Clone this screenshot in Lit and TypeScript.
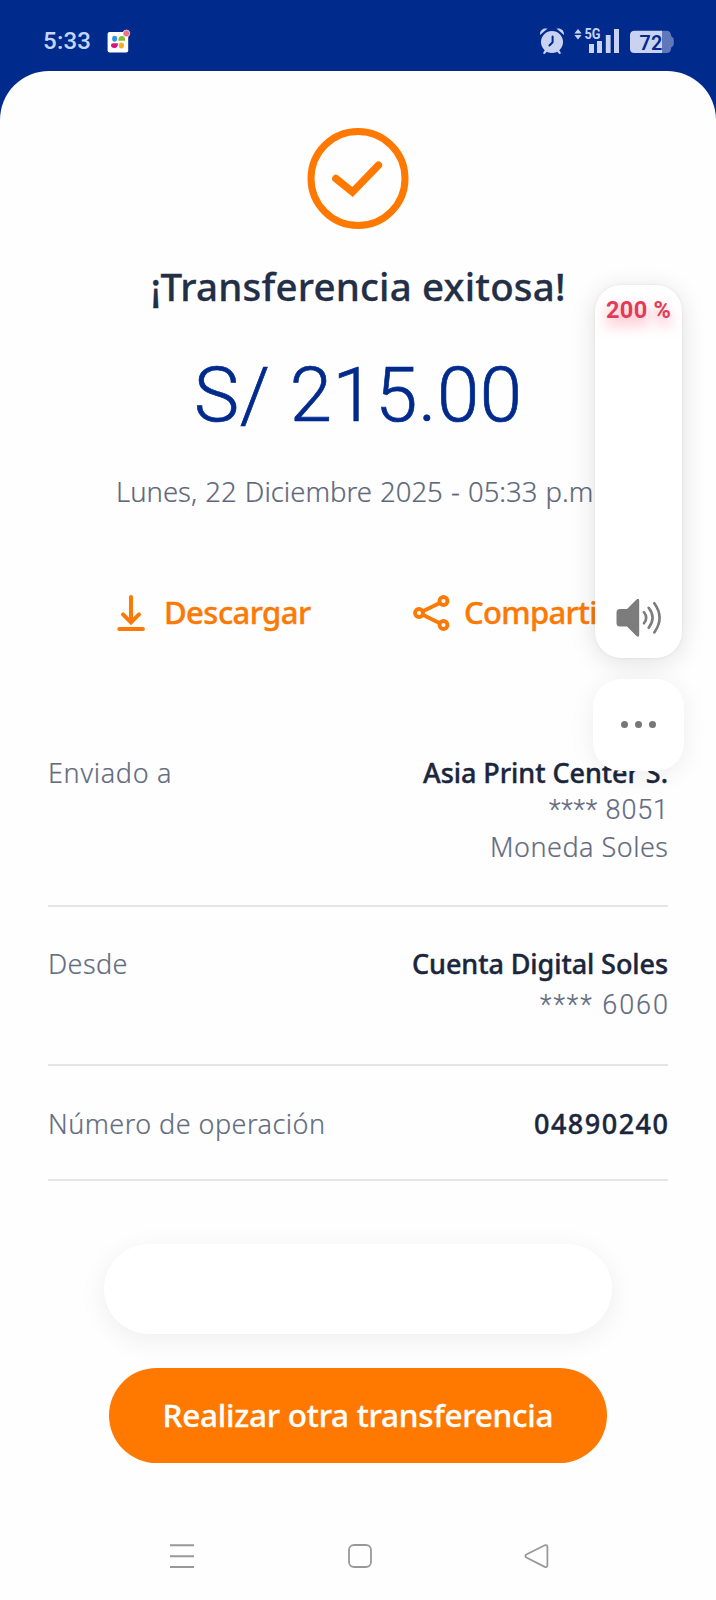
import { LitElement, html, css, svg } from "lit";
import { customElement, property } from "lit/decorators.js";

/** One line of text whose tracking is spread so that it fills `width` pixels. */
@customElement("tracked-text")
class TrackedText extends LitElement {
  static styles = css`
    :host { display: block; white-space: nowrap; flex: none; }
    .line { display: inline-block; white-space: pre; }
  `;
  @property() text = "";
  @property({ type: Number }) width = 0;

  updated() {
    const line = this.renderRoot.querySelector(".line") as HTMLElement;
    line.style.letterSpacing = "0px";
    const natural = line.getBoundingClientRect().width;
    const gap = (this.width - natural) / (this.text.length - 1);
    line.style.letterSpacing = `${gap}px`;
    line.style.marginRight = `${-gap}px`;
  }
  render() {
    return html`<span class="line">${this.text}</span>`;
  }
}

interface Line { text: string; width: number; kind: string }
interface Row { label: string; labelWidth: number; cls: string; lines: Line[] }

const rows: Row[] = [
  { label: "Enviado a", labelWidth: 123.5, cls: "r1", lines: [
    { text: "Asia Print Center S.", width: 245, kind: "strong" },
    { text: "**** 8051", width: 119, kind: "mask l36" },
    { text: "Moneda Soles", width: 178, kind: "l39" },
  ] },
  { label: "Desde", labelWidth: 79.5, cls: "r2", lines: [
    { text: "Cuenta Digital Soles", width: 256, kind: "strong" },
    { text: "**** 6060", width: 128, kind: "mask l40" },
  ] },
  { label: "Número de operación", labelWidth: 277, cls: "r3", lines: [
    { text: "04890240", width: 134, kind: "strong" },
  ] },
];

@customElement("app-root")
class AppRoot extends LitElement {
  static styles = css`
    :host { display: block; font-family: "Noto Sans", Roboto, sans-serif; }
    * { box-sizing: border-box; }
    svg { display: block; flex: none; }
    .screen { position: relative; width: 716px; height: 1600px; background: #002b8d; overflow: hidden; display: flex; flex-direction: column; }
    .status { height: 71px; flex: none; display: flex; align-items: flex-start; padding: 0 42px 0 43px; }
    .clock { font-family: Roboto, sans-serif; font-size: 24px; line-height: 28px; font-weight: 500; color: #c6d4ff; margin-top: 27px; }
    .app { margin: 29px 0 0 16px; }
    .signals { margin: 26px 0 0 auto; }
    .sheet { flex: 1; background: #fefefe; border-radius: 49px 49px 0 0; display: flex; flex-direction: column; align-items: center; }
    .check { margin-top: 56px; }
    .title { margin-top: 32px; font-size: 38.5px; line-height: 50px; font-weight: 500; color: #232f46; -webkit-text-stroke: .3px; }
    .amount { margin-top: 39px; font-family: Roboto, sans-serif; font-size: 76px; line-height: 90px; font-weight: 300; color: #002a8c; -webkit-text-stroke: .7px; }
    .date { margin-top: 34.5px; font-size: 27.5px; line-height: 34px; font-weight: 300; color: #5f687b; word-spacing: 1px; -webkit-text-stroke: .2px; }
    .actions { width: 100%; margin-top: 85px; height: 38px; padding-left: 116px; display: flex; align-items: center; color: #fb7905; font-size: 31px; line-height: 35px; font-weight: 500; -webkit-text-stroke: .4px; }
    .actions tracked-text { margin-bottom: 1px; }
    .download { margin-right: 18px; }
    .share { margin: 0 14px 0 102px; }
    .rows { width: 620px; margin-top: 123.5px; }
    .row { display: flex; justify-content: space-between; border-bottom: 2px solid #e4e5e7; font-size: 27px; line-height: 36px; font-weight: 300; color: #646c7e; -webkit-text-stroke: .2px; }
    .r1 { height: 151.5px; }
    .r2 { height: 159px; padding-top: 39.5px; }
    .r3 { height: 115px; padding-top: 40px; }
    .values { display: flex; flex-direction: column; align-items: flex-end; }
    .strong { font-weight: 500; color: #1b263d; -webkit-text-stroke: .4px; }
    .mask { font-family: Roboto, sans-serif; }
    .l36 { line-height: 38px; margin-bottom: -2px; }
    .l39 { line-height: 39px; }
    .l40 { line-height: 46px; }
    .ghost { width: 508px; height: 90px; flex: none; margin-top: 63.5px; border-radius: 45px; background: #fff; box-shadow: 0 6px 28px rgba(0,0,0,.065); }
    .cta { width: 498px; height: 95px; flex: none; margin-top: 33.5px; padding-bottom: 1px; border-radius: 47.5px; background: #ff7900; display: flex; align-items: center; justify-content: center; color: #fff; font-size: 31.5px; line-height: 38px; font-weight: 500; -webkit-text-stroke: .3px; }
    .nav { width: 100%; margin-top: 80px; padding-left: 169px; display: flex; }
    .home { margin-left: 152px; }
    .back { margin-left: 151px; }
    .volume { position: absolute; left: 595px; top: 285px; width: 87px; height: 373px; border-radius: 26px; background: #fff; box-shadow: 0 4px 26px rgba(0,0,0,.12), 0 0 3px rgba(0,0,0,.07); display: flex; flex-direction: column; align-items: center; justify-content: space-between; padding: 11px 0 20px; }
    .percent { font-family: Roboto, sans-serif; font-size: 23.5px; line-height: 28px; font-weight: 700; color: #e23b56; text-shadow: 0 7px 14px rgba(255,60,95,.55); }
    .more { position: absolute; left: 593px; top: 679px; width: 91px; height: 92px; border-radius: 28px; background: #fff; box-shadow: 0 4px 26px rgba(0,0,0,.07); display: flex; align-items: center; justify-content: center; gap: 7px; padding-bottom: 1px; }
    .dot { width: 7px; height: 7px; border-radius: 50%; background: #777; }
  `;

  private statusIcons() {
    return svg`<svg width="134" height="30" viewBox="540 26 134 30">
      <g fill="#c9d3f1">
        <circle cx="552" cy="42" r="11"/>
        <path d="M540 35C539.600 30.400 543 27.600 547.600 28.600Z M564 35C564.400 30.400 561 27.600 556.400 28.600Z"/>
        <path d="M545.500 49l-2.200 3.400a1 1 0 0 0 1.800 1l2.900-3Z M558.500 49l2.200 3.400a1 1 0 0 1-1.800 1l-2.900-3Z"/>
        <path d="M574.400 33.400L578 29l3.600 4.400Z M574.400 35L578 39.400l3.600-4.400Z"/>
        <rect x="589" y="44" width="5" height="9"/><rect x="597" y="41" width="5" height="12"/>
        <rect x="605.800" y="35" width="4.800" height="18"/><rect x="614" y="29" width="5" height="24"/>
        <text x="584.400" y="39.200" font-size="13.800" font-weight="700" font-family="Roboto" textLength="16" lengthAdjust="spacingAndGlyphs">5G</text>
      </g>
      <path d="M552.600 36.500v5.800l-3.200 3.200" fill="none" stroke="#002b8d" stroke-width="2" stroke-linecap="round"/>
      <path d="M662 30.700h4.500q4 0 4.500 4.400 0 1.600 1.400 2.200 1.400.6 1.400 2.400v4.400q0 1.800-1.400 2.400-1.400.6-1.400 2.200-.5 4.400-4.500 4.400H662Z" fill="#6078ba"/>
      <path d="M634.500 30.700H662V53.100h-27.500q-4.500 0-4.500-4.500V35.200q0-4.500 4.500-4.500Z" fill="#c9d3f1"/>
      <text x="639.600" y="50.200" font-size="20.500" font-weight="600" font-family="Roboto" fill="#002b8d" textLength="22.600" lengthAdjust="spacingAndGlyphs">72</text>
    </svg>`;
  }

  render() {
    return html`<div class="screen">
      <div class="status">
        <tracked-text class="clock" text="5:33" width="48"></tracked-text>
        <svg class="app" width="24" height="24" viewBox="107 29 24 24">
          <rect x="107.600" y="32" width="20.600" height="20.600" rx="2" fill="#fff"/>
          <ellipse cx="114.600" cy="38.800" rx="2.500" ry="3" fill="#2a9bdc"/>
          <path d="M118.400 40.800q-.2-4.800 3.600-4.800 3.200 0 3.200 4.800Z" fill="#7fbf2c"/>
          <path d="M111 45q0-1.800 2.200-1.800h4.800q0 4.600-3.400 4.800-3.600.2-3.600-3Z" fill="#d9147d"/>
          <ellipse cx="121.400" cy="45.400" rx="2.600" ry="3" fill="#f6ab2a"/>
          <circle cx="126.400" cy="33.400" r="3.400" fill="#f0707f" stroke="#fff" stroke-width=".6"/>
        </svg>
        <div class="signals">${this.statusIcons()}</div>
      </div>
      <div class="sheet">
        <svg class="check" width="102" height="102" viewBox="0 0 102 102" fill="none" stroke="#ff7900">
          <circle cx="51" cy="51.500" r="47" stroke-width="7"/>
          <path d="M28.800 51.500L45.500 65L71.500 38.200" stroke-width="7.400" stroke-linecap="round"/>
        </svg>
        <tracked-text class="title" text="¡Transferencia exitosa!" width="415"></tracked-text>
        <tracked-text class="amount" text="S/ 215.00" width="328"></tracked-text>
        <tracked-text class="date" text="Lunes, 22 Diciembre 2025 - 05:33 p.m." width="484"></tracked-text>
        <div class="actions">
          <svg class="download" width="30" height="38" viewBox="0 0 30 38" fill="none" stroke="#fb7905" stroke-width="4" stroke-linecap="round">
            <path d="M15 3v25M7 20.300l8 8 8-8M3.300 35h23.600"/>
          </svg>
          <tracked-text text="Descargar" width="147"></tracked-text>
          <svg class="share" width="37" height="38" viewBox="0 0 37 38" fill="none" stroke="#fb7905" stroke-width="3.800">
            <circle cx="6" cy="19" r="4"/><circle cx="30.500" cy="7" r="4"/><circle cx="30.500" cy="31" r="4"/>
            <path d="M9.800 17.200L26.800 9M9.800 20.800L26.800 29.200"/>
          </svg>
          <tracked-text text="Compartir" width="146"></tracked-text>
        </div>
        <div class="rows">
          ${rows.map(r => html`<div class="row ${r.cls}">
            <tracked-text .text=${r.label} .width=${r.labelWidth}></tracked-text>
            <div class="values">${r.lines.map(l => html`<tracked-text class=${l.kind} .text=${l.text} .width=${l.width}></tracked-text>`)}</div>
          </div>`)}
        </div>
        <div class="ghost"></div>
        <div class="cta"><tracked-text text="Realizar otra transferencia" width="391"></tracked-text></div>
        <div class="nav">
          <svg width="26" height="26" viewBox="0 0 26 26" stroke="#999" stroke-width="2"><path d="M1 2.300h24M1 13.200h24M1 24h24"/></svg>
          <svg class="home" width="26" height="26" viewBox="0 0 26 26" fill="none" stroke="#999" stroke-width="1.800"><rect x="2" y="2" width="22" height="22" rx="5"/></svg>
          <svg class="back" width="26" height="26" viewBox="0 0 26 26" fill="none" stroke="#999" stroke-width="1.800" stroke-linejoin="round"><path d="M2.300 11.500L20.800 2.300q2.300-.8 2.600 1.500v18.600q-.3 2.300-2.600 1.500L2.300 14.500q-1.800-1.500 0-3Z"/></svg>
        </div>
      </div>
      <div class="volume">
        <tracked-text class="percent" text="200 %" width="65"></tracked-text>
        <svg width="46" height="40" viewBox="0 0 46 40">
          <path d="M4 11H11L20.500 1.600q2.700-2 2.700 1V37q0 3-2.700 1L11 28.600H4Q.5 28.600.5 25.100V14.500Q.5 11 4 11Z" fill="#7c7c7c"/>
          <path d="M28 14.300q4.400 5.500 0 11M32.700 9.800q7.800 10 0 20M38.300 5.200q10.600 14.600 0 29.200" fill="none" stroke="#7c7c7c" stroke-width="2.600" stroke-linecap="round"/>
        </svg>
      </div>
      <div class="more"><span class="dot"></span><span class="dot"></span><span class="dot"></span></div>
    </div>`;
  }
}
